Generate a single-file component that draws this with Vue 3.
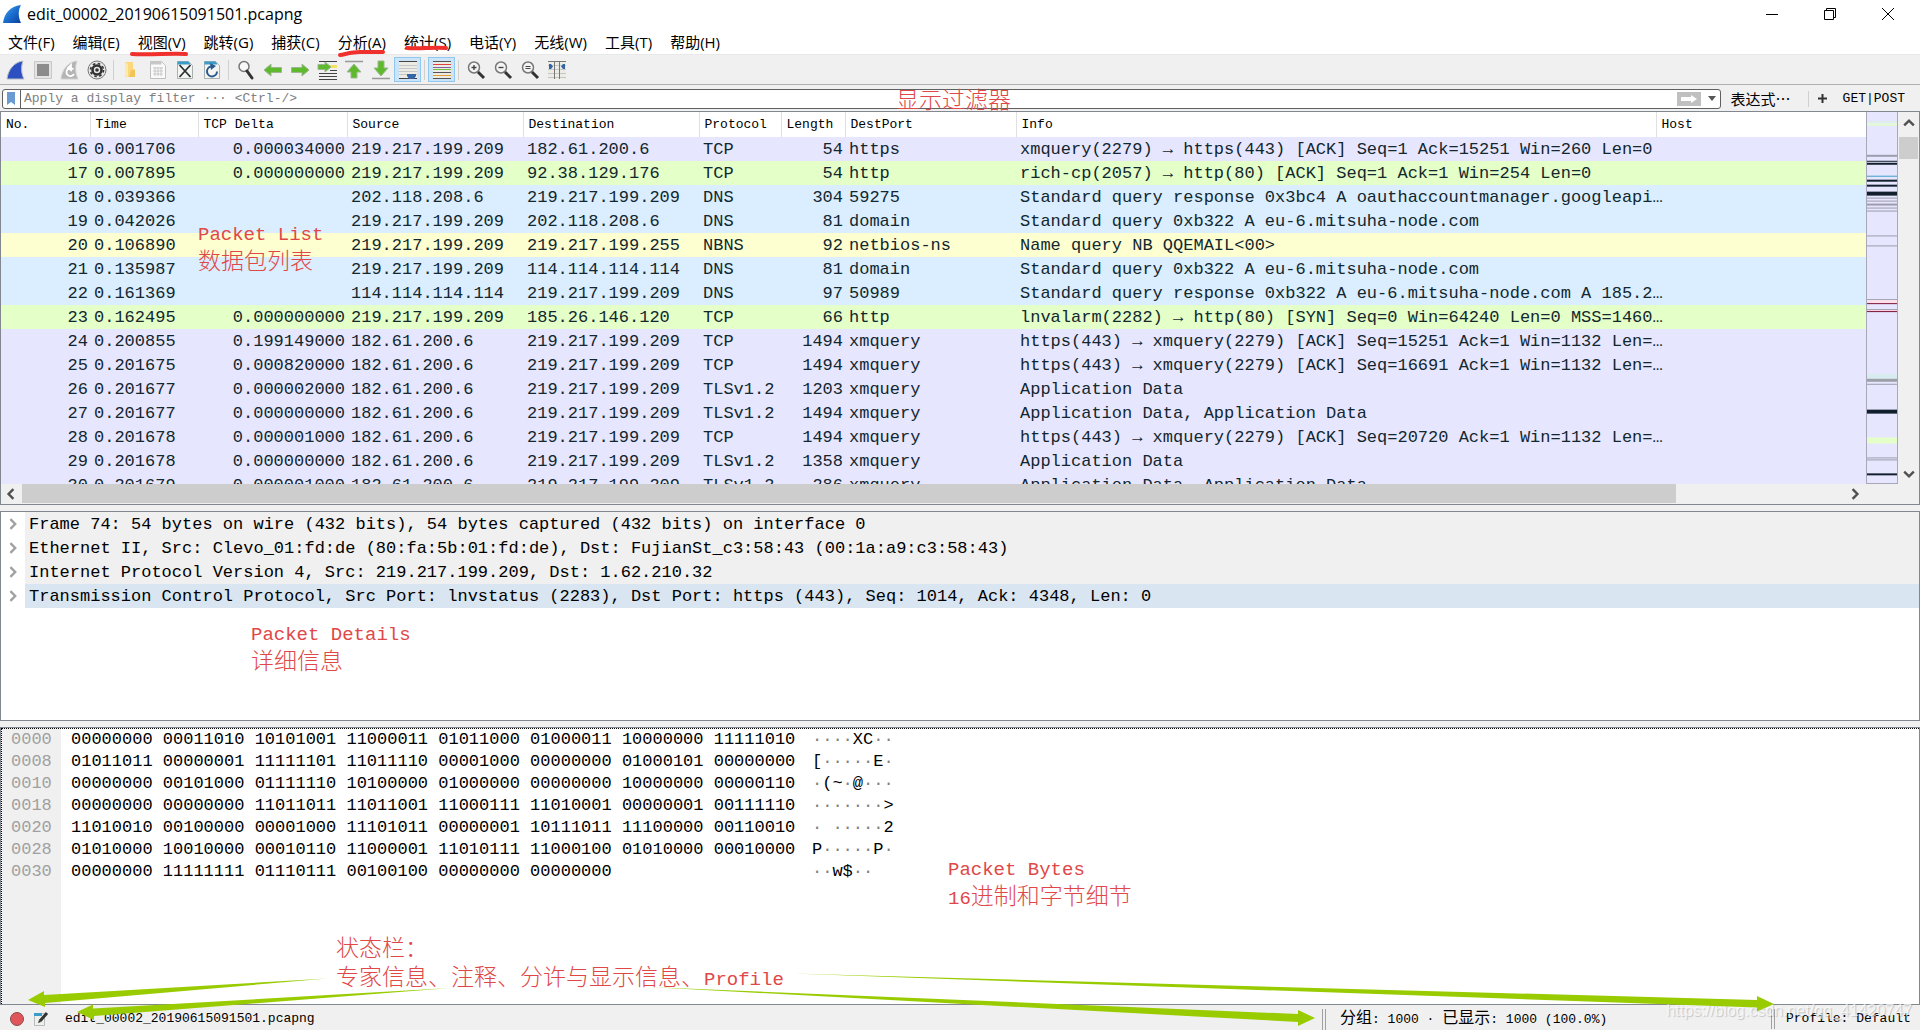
<script setup>
const fileName = 'edit_00002_20190615091501.pcapng'

const menus = [
  ['文件', '(F)'],
  ['编辑', '(E)'],
  ['视图', '(V)'],
  ['跳转', '(G)'],
  ['捕获', '(C)'],
  ['分析', '(A)'],
  ['统计', '(S)'],
  ['电话', '(Y)'],
  ['无线', '(W)'],
  ['工具', '(T)'],
  ['帮助', '(H)'],
]

const columns = [
  { name: 'No.', cls: 'c-no' },
  { name: 'Time', cls: 'c-time' },
  { name: 'TCP Delta', cls: 'c-delta' },
  { name: 'Source', cls: 'c-addr' },
  { name: 'Destination', cls: 'c-addr' },
  { name: 'Protocol', cls: 'c-proto' },
  { name: 'Length', cls: 'c-len' },
  { name: 'DestPort', cls: 'c-port' },
  { name: 'Info', cls: 'c-info' },
  { name: 'Host', cls: 'c-host' },
]

const me = '219.217.199.209'
const srv = '182.61.200.6'
const packets = [
  ['tcp', 16, '0.001706', '0.000034000', me, srv, 'TCP', 54, 'https', 'xmquery(2279) → https(443) [ACK] Seq=1 Ack=15251 Win=260 Len=0'],
  ['http', 17, '0.007895', '0.000000000', me, '92.38.129.176', 'TCP', 54, 'http', 'rich-cp(2057) → http(80) [ACK] Seq=1 Ack=1 Win=254 Len=0'],
  ['udp', 18, '0.039366', '', '202.118.208.6', me, 'DNS', 304, '59275', 'Standard query response 0x3bc4 A oauthaccountmanager.googleapi…'],
  ['udp', 19, '0.042026', '', me, '202.118.208.6', 'DNS', 81, 'domain', 'Standard query 0xb322 A eu-6.mitsuha-node.com'],
  ['smb', 20, '0.106890', '', me, '219.217.199.255', 'NBNS', 92, 'netbios-ns', 'Name query NB QQEMAIL<00>'],
  ['udp', 21, '0.135987', '', me, '114.114.114.114', 'DNS', 81, 'domain', 'Standard query 0xb322 A eu-6.mitsuha-node.com'],
  ['udp', 22, '0.161369', '', '114.114.114.114', me, 'DNS', 97, '50989', 'Standard query response 0xb322 A eu-6.mitsuha-node.com A 185.2…'],
  ['http', 23, '0.162495', '0.000000000', me, '185.26.146.120', 'TCP', 66, 'http', 'lnvalarm(2282) → http(80) [SYN] Seq=0 Win=64240 Len=0 MSS=1460…'],
  ['tcp', 24, '0.200855', '0.199149000', srv, me, 'TCP', 1494, 'xmquery', 'https(443) → xmquery(2279) [ACK] Seq=15251 Ack=1 Win=1132 Len=…'],
  ['tcp', 25, '0.201675', '0.000820000', srv, me, 'TCP', 1494, 'xmquery', 'https(443) → xmquery(2279) [ACK] Seq=16691 Ack=1 Win=1132 Len=…'],
  ['tcp', 26, '0.201677', '0.000002000', srv, me, 'TLSv1.2', 1203, 'xmquery', 'Application Data'],
  ['tcp', 27, '0.201677', '0.000000000', srv, me, 'TLSv1.2', 1494, 'xmquery', 'Application Data, Application Data'],
  ['tcp', 28, '0.201678', '0.000001000', srv, me, 'TCP', 1494, 'xmquery', 'https(443) → xmquery(2279) [ACK] Seq=20720 Ack=1 Win=1132 Len=…'],
  ['tcp', 29, '0.201678', '0.000000000', srv, me, 'TLSv1.2', 1358, 'xmquery', 'Application Data'],
  ['tcp', 30, '0.201679', '0.000001000', srv, me, 'TLSv1.2', 286, 'xmquery', 'Application Data, Application Data'],
]

/* [y, height, colour] of the coloured strips in the intelligent scroll bar */
const strips = [
  [9, 1, '#d8f0e4'], [11, 3, '#e2f8d8'], [43, 2, '#9c9cac'], [49, 1, '#12202e'], [51, 2, '#12202e'],
  [64, 1, '#3fa0c8'], [68, 2, '#12202e'], [73, 2, '#12202e'], [80, 4, '#12202e'], [86, 1, '#9c9cac'],
  [89, 1, '#9c9cac'], [92, 2, '#9c9cac'], [96, 1, '#9c9cac'], [99, 1, '#9c9cac'], [124, 1, '#9c9cac'],
  [134, 1, '#9c9cac'], [188, 1, '#9c9cac'], [189, 3, '#fbe0e8'], [192, 1, '#7a1238'], [198, 1, '#9c9cac'],
  [199, 1, '#fbd0dc'], [200, 1, '#7a1238'], [263, 5, '#d8ecf0'], [268, 3, '#9c9fa8'], [273, 1, '#9c9cac'],
  [299, 4, '#12202e'], [327, 6, '#e4ffc7'], [347, 1, '#9c9cac'], [349, 1, '#9c9cac'], [363, 2, '#12202e'],
]

const details = [
  'Frame 74: 54 bytes on wire (432 bits), 54 bytes captured (432 bits) on interface 0',
  'Ethernet II, Src: Clevo_01:fd:de (80:fa:5b:01:fd:de), Dst: FujianSt_c3:58:43 (00:1a:a9:c3:58:43)',
  'Internet Protocol Version 4, Src: 219.217.199.209, Dst: 1.62.210.32',
  'Transmission Control Protocol, Src Port: lnvstatus (2283), Dst Port: https (443), Seq: 1014, Ack: 4348, Len: 0',
]

const bytes = [
  ['0000', '00000000 00011010 10101001 11000011 01011000 01000011 10000000 11111010', '····XC··'],
  ['0008', '01011011 00000001 11111101 11011110 00001000 00000000 01000101 00000000', '[·····E·'],
  ['0010', '00000000 00101000 01111110 10100000 01000000 00000000 10000000 00000110', '·(~·@···'],
  ['0018', '00000000 00000000 11011011 11011001 11000111 11010001 00000001 00111110', '·······>'],
  ['0020', '11010010 00100000 00001000 11101011 00000001 10111011 11100000 00110010', '· ·····2'],
  ['0028', '01010000 10010000 00010110 11000001 11010111 11000100 01010000 00010000', 'P·····P·'],
  ['0030', '00000000 11111111 01110111 00100100 00000000 00000000', '··w$··'],
]
</script>

<template>
  <div class="window">
    <header class="titlebar">
      <svg class="fin" viewBox="0 0 20 20" aria-hidden="true">
        <defs>
          <linearGradient id="fin-fill" x1="0" y1="0" x2="1" y2="1">
            <stop offset="0" stop-color="#5aa6e6" />
            <stop offset=".5" stop-color="#1a6fd0" />
            <stop offset="1" stop-color="#0d3f9a" />
          </linearGradient>
        </defs>
        <path d="M1 19C2 10 8 2 19 1c-3 5-3 12 0 18z" fill="url(#fin-fill)" />
      </svg>
      <h1>{{ fileName }}</h1>
      <div class="controls">
        <button aria-label="最小化"><svg viewBox="0 0 14 14"><path d="M1 7.500h12" /></svg></button>
        <button aria-label="还原"><svg viewBox="0 0 14 14"><path d="M1.500 3.500h9v9h-9zM3.500 3.500v-2h9v9h-2" /></svg></button>
        <button aria-label="关闭"><svg viewBox="0 0 14 14"><path d="M1 1l12 12M13 1L1 13" /></svg></button>
      </div>
    </header>

    <nav class="menubar">
      <button v-for="m in menus" :key="m[1]">{{ m[0] }}{{ m[1] }}</button>
      <svg class="marks" viewBox="0 0 460 14" aria-hidden="true">
        <path d="M2 9C20 10 42 8 56 9" />
        <path d="M210 10C216 9 222 7 230 7S244 7 253 7" />
        <path d="M277 3C290 4 304 2 316 3" />
      </svg>
    </nav>

    <div class="toolbar">
      <button aria-label="开始捕获">
        <svg viewBox="0 0 20 20"><path d="M1 19C2 10 8 2 17 1c-2 5-2 12 1 18z" fill="#2c50c0" stroke="#b8bcc8" /></svg>
      </button>
      <button aria-label="停止捕获">
        <svg viewBox="0 0 20 20"><path d="M1.500 1.500h17v17h-17z" fill="#e4e4e4" stroke="#c8c8c8" /><path d="M4 4h12v12H4z" fill="#8c8c8c" /></svg>
      </button>
      <button aria-label="重新捕获">
        <svg viewBox="0 0 20 20"><path d="M1 19C2 10 8 2 17 1c-2 5-2 12 1 18z" fill="#b4b4b4" stroke="#d0d0d0" /><path d="M13.500 9.500A4 4 0 1 0 14 14M8 8l3-3v5z" fill="none" stroke="#fff" stroke-width="1.800" /></svg>
      </button>
      <button aria-label="捕获选项">
        <svg viewBox="0 0 20 20"><circle cx="10" cy="10" r="9" fill="#e8e8e8" stroke="#777" /><circle cx="10" cy="10" r="4.500" fill="none" stroke="#333" stroke-width="2.600" /><circle cx="10" cy="10" r="6.500" fill="none" stroke="#333" stroke-width="1.600" stroke-dasharray="2.600 2.500" /><circle cx="10" cy="10" r="1.800" fill="#333" /></svg>
      </button>
      <i class="sep"></i>
      <button aria-label="打开">
        <svg viewBox="0 0 20 20"><path d="M4 2h8v7h2v8H4z" fill="#fbd87c" /><path d="M10 10h4v7h-6z" fill="#f3c558" /><path d="M4 2l3 2v14l-3-2z" fill="#ffe8a8" /></svg>
      </button>
      <button aria-label="保存">
        <svg viewBox="0 0 20 20"><path d="M2.500 1.500h11l4 4v13h-15z" fill="#fafafa" stroke="#c0c0c0" /><path d="M2.500 1.500h11v3h-11z" fill="#c8c8c8" /><path d="M5 8h10M5 11h10M5 14h10M7 7v9M10 7v9M13 7v9" stroke="#c8c8c8" /></svg>
      </button>
      <button aria-label="关闭文件">
        <svg viewBox="0 0 20 20"><path d="M2.500 1.500h11l4 4v13h-15z" fill="#f4f5f0" stroke="#a8b0b0" /><path d="M2.500 1.500h11l2 3h-13z" fill="#3a9cc8" /><path d="M4.500 5l11 12M15.500 5l-11 12" stroke="#2a3038" stroke-width="1.800" /></svg>
      </button>
      <button aria-label="重新加载">
        <svg viewBox="0 0 20 20"><path d="M2.500 1.500h11l4 4v13h-15z" fill="#f4f5f0" stroke="#a8b0b0" /><path d="M2.500 1.500h11l2 3h-13z" fill="#3a9cc8" /><path d="M9 6.500a5 5 0 1 0 6 5" fill="none" stroke="#285a90" stroke-width="2" /><path d="M8 3l6 3-5 4z" fill="#285a90" /></svg>
      </button>
      <i class="sep"></i>
      <button aria-label="查找">
        <svg viewBox="0 0 20 20"><circle cx="8" cy="6.500" r="5" fill="#f8f8f8" stroke="#777" stroke-width="1.500" /><path d="M11 11l5 7" stroke="#333" stroke-width="3" stroke-linecap="round" /></svg>
      </button>
      <button aria-label="后退">
        <svg viewBox="0 0 20 20"><path d="M1 10l7-6v3.500h10.500v5H8V16z" fill="#5fb92c" stroke="#9cb890" /></svg>
      </button>
      <button aria-label="前进">
        <svg viewBox="0 0 20 20"><path d="M19 10l-7-6v3.500H1.500v5H12V16z" fill="#5fb92c" stroke="#9cb890" /></svg>
      </button>
      <button aria-label="转到分组">
        <svg viewBox="0 0 20 20"><path d="M2 1.500h18M2 13.500h18M2 16.500h18M2 19.500h18M13 10.500h7" stroke="#444" /><path d="M12 5h8v3h-8z" fill="#f4e060" /><path d="M14 7l-6-5v2.500H1v5h7V12z" fill="#5fb92c" stroke="#9cb890" /></svg>
      </button>
      <button aria-label="首个分组">
        <svg viewBox="0 0 20 20"><path d="M1 1.500h18" stroke="#999" stroke-width="1.500" /><path d="M10 4l7 8h-4v6H7v-6H3z" fill="#5fb92c" stroke="#9cb890" /></svg>
      </button>
      <button aria-label="末个分组">
        <svg viewBox="0 0 20 20"><path d="M1 18.500h18" stroke="#999" stroke-width="1.500" /><path d="M10 16L3 8h4V1h6v7h4z" fill="#5fb92c" stroke="#9cb890" /></svg>
      </button>
      <button class="on" aria-label="自动滚动" aria-pressed="true">
        <svg viewBox="0 0 20 20"><path d="M1 2h18v16H1z" fill="#ecebe4" /><path d="M1 1.500h18M1 18.500h18" stroke="#444" /><path d="M1 5.500h18M1 8.500h18M1 11.500h18M1 14.500h18" stroke="#c4c8c8" /><path d="M9 14h9v2l-2 3h-5l-2-3z" fill="#3465a4" /></svg>
      </button>
      <i class="sep"></i>
      <button class="on" aria-label="着色" aria-pressed="true">
        <svg viewBox="0 0 20 20"><path d="M1 1h18v18H1z" fill="#ecebe4" /><path d="M1 1.500h18M1 12.500h18M1 18.500h18" stroke="#555" /><path d="M1 4.500h18" stroke="#e04040" /><path d="M1 7.500h18" stroke="#8060a0" /><path d="M1 9.500h18" stroke="#70c040" /><path d="M1 15.500h18" stroke="#e0a030" /></svg>
      </button>
      <i class="sep"></i>
      <button aria-label="放大">
        <svg viewBox="0 0 20 20"><circle cx="8" cy="7.500" r="5.500" fill="#f4f4f4" stroke="#777" stroke-width="1.500" /><path d="M12 12l6 6" stroke="#333" stroke-width="3" /><path d="M5.500 7.500h5M8 5v5" stroke="#444" stroke-width="1.400" /></svg>
      </button>
      <button aria-label="缩小">
        <svg viewBox="0 0 20 20"><circle cx="8" cy="7.500" r="5.500" fill="#f4f4f4" stroke="#777" stroke-width="1.500" /><path d="M12 12l6 6" stroke="#333" stroke-width="3" /><path d="M5.500 7.500h5" stroke="#444" stroke-width="1.400" /></svg>
      </button>
      <button aria-label="原始大小">
        <svg viewBox="0 0 20 20"><circle cx="8" cy="7.500" r="5.500" fill="#f4f4f4" stroke="#777" stroke-width="1.500" /><path d="M12 12l6 6" stroke="#333" stroke-width="3" /><path d="M5.500 6.500h5M5.500 8.500h5" stroke="#444" stroke-width="1.200" /></svg>
      </button>
      <button aria-label="调整列宽">
        <svg viewBox="0 0 20 20"><path d="M1 1h18v18H1z" fill="#ecebe4" /><path d="M1 5.500h18M1 9.500h18M1 13.500h18M1 17.500h18" stroke="#c4c8c8" /><path d="M1 1.500h18M7.500 1v18M12.500 1v18" stroke="#777" /><path d="M2 4h2l2 2.500L4 9H2zM18 4h-2l-2 2.500L16 9h2z" fill="#3465a4" /></svg>
      </button>
    </div>

    <div class="filterbar">
      <div class="filterbox">
        <svg class="bookmark" viewBox="0 0 10 14" aria-hidden="true"><path d="M1 0h8v13l-4-3-4 3z" fill="#6b9bd2" /></svg>
        <input type="text" aria-label="Display filter" placeholder="Apply a display filter ··· &lt;Ctrl-/&gt;" />
        <button class="apply" aria-label="应用"><svg viewBox="0 0 24 14"><path d="M4 5h10V3l6 4-6 4V9H4z" fill="#fff" /></svg></button>
        <button class="caret" aria-label="历史"><svg viewBox="0 0 8 5"><path d="M0 0h8L4 5z" fill="#555" /></svg></button>
      </div>
      <button class="expr">表达式…</button>
      <i class="sep"></i>
      <button class="plus" aria-label="添加过滤按钮"><svg viewBox="0 0 9 9"><path d="M4.500 0v9M0 4.500h9" stroke="#333" stroke-width="2" /></svg></button>
      <button class="quick">GET|POST</button>
      <span class="note note-filter">显示过滤器</span>
    </div>

    <main class="panes">
      <section class="pane list">
        <div class="list-top">
          <div class="table-clip">
            <table>
              <colgroup><col v-for="c in columns" :key="c.name" :class="c.cls" /></colgroup>
              <thead>
                <tr><th v-for="c in columns" :key="c.name" scope="col">{{ c.name }}</th></tr>
              </thead>
              <tbody>
                <tr v-for="p in packets" :key="p[1]" :class="p[0]">
                  <td class="num">{{ p[1] }}</td>
                  <td>{{ p[2] }}</td>
                  <td class="num">{{ p[3] }}</td>
                  <td>{{ p[4] }}</td>
                  <td>{{ p[5] }}</td>
                  <td>{{ p[6] }}</td>
                  <td class="num">{{ p[7] }}</td>
                  <td>{{ p[8] }}</td>
                  <td>{{ p[9] }}</td>
                  <td></td>
                </tr>
              </tbody>
            </table>
          </div>
          <svg class="minimap" viewBox="0 0 30 373" preserveAspectRatio="none" aria-hidden="true">
            <rect v-for="s in strips" :key="s[0]" x="0" :y="s[0]" width="30" :height="s[1]" :fill="s[2]" />
          </svg>
          <div class="vscroll">
            <svg class="chev" viewBox="0 0 10 10"><path d="M1 7l4-4 4 4" /></svg>
            <div class="vthumb"></div>
            <svg class="chev" viewBox="0 0 10 10"><path d="M1 3l4 4 4-4" /></svg>
          </div>
        </div>
        <div class="hscroll">
          <svg class="chev" viewBox="0 0 10 10"><path d="M7 1L3 5l4 4" /></svg>
          <div class="track"><div class="hthumb"></div></div>
          <svg class="chev" viewBox="0 0 10 10"><path d="M3 1l4 4-4 4" /></svg>
        </div>
        <p class="note note-list">Packet List<br /><span class="zh">数据包列表</span></p>
      </section>

      <section class="pane details">
        <ul>
          <li v-for="(d, i) in details" :key="i" :class="{ selected: i === 3 }">
            <svg viewBox="0 0 10 10" aria-hidden="true"><path d="M2 1l4 4-4 4" /></svg>
            <span>{{ d }}</span>
          </li>
        </ul>
        <p class="note note-details">Packet Details<br /><span class="zh">详细信息</span></p>
      </section>

      <section class="pane bytes">
        <div class="offsets"><div v-for="b in bytes" :key="b[0]">{{ b[0] }}</div></div>
        <div class="bits"><div v-for="b in bytes" :key="b[0]">{{ b[1] }}</div></div>
        <div class="ascii">
          <div v-for="b in bytes" :key="b[0]"><span v-for="(ch, i) in b[2]" :key="i" :class="{ dot: ch === '·' }">{{ ch }}</span></div>
        </div>
        <p class="note note-bytes">Packet Bytes<br />16<span class="zh">进制和字节细节</span></p>
        <p class="note note-status"><span class="zh">状态栏：<br />专家信息、注释、分许与显示信息、</span>Profile</p>
      </section>
    </main>

    <footer class="statusbar">
      <svg class="expert" viewBox="0 0 16 16" aria-hidden="true"><circle cx="8" cy="8" r="6.500" fill="#e0555a" stroke="#8a4a4c" /></svg>
      <svg class="comment" viewBox="0 0 16 16" aria-hidden="true"><path d="M1.500 2.500h10v12h-10z" fill="#f0f0ea" stroke="#b8bcbc" /><path d="M1 2h8v3H1z" fill="#3a9cc8" /><path d="M14 2L7 10" stroke="#333" stroke-width="3" /><path d="M5 12l1-3 2 2z" fill="#333" /></svg>
      <span class="file">{{ fileName }}</span>
      <span class="counts"><span class="zh">分组</span>: 1000 · <span class="zh">已显示</span>: 1000 (100.0%)</span>
      <span class="profile">Profile: Default</span>
      <span class="watermark">https://blog.csdn.net/qq_41420747</span>
    </footer>

    <svg class="arrows" viewBox="0 0 1920 60" preserveAspectRatio="none" aria-hidden="true">
      <path d="M28 30L44 21v4L327 8.500 45 33v4z" />
      <path d="M77 42l16-7.500v4L450 18 94 46v4z" />
      <path d="M1315 48l-17-8v4L649 17l649 35v4z" />
      <path d="M1774 34l-17-8v4L792 3.500 1757 37.500v4z" />
    </svg>
  </div>
</template>

<style>
body {
  background: #f0f0f0;
}
</style>

<style scoped>
.window {
  position: relative;
  display: flex;
  flex-direction: column;
  height: 100vh;
  overflow: hidden;
  background: #f0f0f0;
  color: #000;
  font: 13px/20px 'Liberation Mono', 'Noto Sans CJK SC', monospace;
}
.window * {
  box-sizing: border-box;
}
button {
  margin: 0;
  padding: 0;
  border: 0;
  background: none;
  color: inherit;
  font: inherit;
}
svg {
  display: block;
  flex: none;
}
.titlebar {
  display: flex;
  align-items: center;
  height: 30px;
  flex: none;
  padding: 0 3px 2px 2px;
  background: #fff;
}
.fin {
  width: 20px;
  height: 20px;
}
h1 {
  flex: 1;
  margin: 0 0 0 5px;
  font: 16px/28px 'Open Sans', sans-serif;
}
.controls {
  display: flex;
}
.controls button {
  display: grid;
  place-items: center;
  width: 58px;
  height: 28px;
}
.controls svg {
  width: 14px;
  height: 14px;
  fill: none;
  stroke: #000;
}
.menubar {
  position: relative;
  display: flex;
  gap: 18px;
  flex: none;
  height: 25px;
  padding-left: 8px;
  background: #fff;
  border-bottom: 1px solid #e8e8e8;
  font: 15px/24px 'Open Sans', 'Noto Sans CJK SC', sans-serif;
}
.marks {
  position: absolute;
  left: 130px;
  top: 15px;
  width: 460px;
  height: 14px;
  fill: none;
  stroke: #f0302c;
  stroke-width: 4;
  stroke-linecap: round;
}
.toolbar {
  display: flex;
  align-items: center;
  flex: none;
  height: 30px;
  padding-left: 2px;
  border-bottom: 1px solid #b0b0b0;
}
.toolbar button {
  display: grid;
  place-items: center;
  width: 27px;
  height: 25px;
}
.toolbar .on {
  background: #cce4f7;
  border: 1px solid #90c8f0;
}
.toolbar svg {
  width: 20px;
  height: 20px;
}
.sep {
  width: 1px;
  height: 20px;
  margin: 0 3px;
  background: #d0d0d0;
}
.filterbar {
  position: relative;
  display: flex;
  align-items: center;
  flex: none;
  height: 26px;
  padding: 1px 15px 0 2px;
}
.filterbox {
  display: flex;
  align-items: center;
  flex: 1;
  height: 20px;
  border: 1px solid #606060;
  border-radius: 3px;
  background: #fff;
}
.bookmark {
  width: 10px;
  height: 14px;
  margin: 0 4px 0 3px;
}
.filterbox input {
  flex: 1;
  min-width: 0;
  height: 18px;
  padding: 1px 0 0 3px;
  border: 0;
  border-left: 1px solid #606060;
  outline: 0;
  background: none;
  font: inherit;
}
.filterbox input::placeholder {
  color: #808080;
  opacity: 1;
}
.apply {
  width: 24px;
  height: 14px;
  background: #c0c0c0;
}
.caret {
  margin: 0 4px 0 7px;
}
.caret svg {
  width: 8px;
  height: 5px;
}
.expr {
  width: 78px;
  padding-left: 10px;
  text-align: left;
  font: 15px/20px 'Noto Sans CJK SC', sans-serif;
}
.filterbar .sep {
  margin: 0 9px;
  height: 16px;
}
.plus svg {
  width: 9px;
  height: 9px;
}
.quick {
  margin-left: 16px;
}
.panes {
  display: flex;
  flex-direction: column;
  gap: 6px;
  flex: 1;
  min-height: 0;
}
.pane {
  position: relative;
  flex-basis: 0;
  min-height: 0;
  border: 1px solid #828790;
  background: #fff;
  overflow: hidden;
  font-size: 17px;
}
.list {
  display: flex;
  flex-direction: column;
  flex-grow: 395;
  background: #f0f0f0;
}
.list-top {
  display: flex;
  flex: 1;
  min-height: 0;
}
.table-clip {
  flex: 1;
  min-width: 0;
  overflow: hidden;
  background: #fff;
}
table {
  width: 100%;
  table-layout: fixed;
  border-collapse: collapse;
}
.c-no { width: 89px; }
.c-time { width: 108px; }
.c-delta { width: 149px; }
.c-addr { width: 176px; }
.c-proto { width: 82px; }
.c-len { width: 64px; }
.c-port { width: 171px; }
.c-info { width: 640px; }
th {
  height: 25px;
  padding: 0 0 0 5px;
  border-right: 1px solid #e0e0e0;
  text-align: left;
  font: 13px/24px 'Liberation Mono', monospace;
}
th:last-child {
  border-right: 0;
}
td {
  height: 24px;
  padding: 1px 2px 0 4px;
  line-height: 23px;
  white-space: pre;
  color: #12272e;
}
.num {
  text-align: right;
}
.tcp { background: #e7e6ff; }
.http { background: #e4ffc7; }
.udp { background: #daeeff; }
.smb { background: #feffd0; }
.minimap {
  width: 32px;
  height: 100%;
  border: 1px solid #a8a8b8;
  border-top: 0;
  background: #e7e6ff;
}
.vscroll {
  display: flex;
  flex-direction: column;
  align-items: center;
  width: 21px;
  padding: 5px 0 4px;
}
.chev {
  width: 12px;
  height: 12px;
  fill: none;
  stroke: #505050;
  stroke-width: 2;
}
.vthumb {
  width: 19px;
  height: 22px;
  margin: 8px 0 auto;
  background: #cdcdcd;
}
.hscroll {
  display: flex;
  align-items: center;
  flex: none;
  height: 20px;
  padding: 0 58px 0 4px;
}
.track {
  flex: 1;
  align-self: stretch;
  margin: 0 9px 1px 5px;
}
.hthumb {
  width: 91%;
  height: 100%;
  background: #cdcdcd;
}
.details {
  flex-grow: 209;
}
.details ul {
  margin: 0;
  padding: 0;
  list-style: none;
}
.details li {
  display: flex;
  align-items: center;
  height: 24px;
  white-space: pre;
}
.details li svg {
  width: 12px;
  height: 12px;
  margin: 0 5px 0 7px;
  fill: none;
  stroke: #a0a0a0;
  stroke-width: 2;
}
.details li span {
  flex: 1;
  padding: 2px 0 0 4px;
  line-height: 22px;
  background: #f0f0f0;
}
.details .selected span {
  background: #d9e6f2;
}
.bytes {
  display: flex;
  flex-grow: 278;
  line-height: 22px;
  white-space: pre;
}
.bytes::after {
  content: '';
  position: absolute;
  inset: 0;
  border-top: 1px dotted #000;
  border-left: 1px dotted #000;
}
.offsets,
.bits,
.ascii {
  padding-top: 1px;
}
.offsets {
  width: 60px;
  padding-left: 10px;
  background: #f0f0f0;
  color: #a0a0a0;
}
.bits {
  width: 751px;
  padding-left: 10px;
}
.dot {
  color: #808080;
}
.statusbar {
  position: relative;
  display: flex;
  align-items: center;
  flex: none;
  height: 25px;
  padding: 3px 5px 0 9px;
  white-space: pre;
}
.expert,
.comment {
  width: 16px;
  height: 16px;
  margin-right: 8px;
}
.file {
  flex: 1;
  padding-left: 8px;
}
.statusbar .zh {
  font-size: 16px;
  line-height: 20px;
}
.counts {
  width: 449px;
  padding-left: 14px;
  border-left: 4px double #a0a0a0;
}
.profile {
  width: 144px;
  padding-left: 11px;
  border-left: 4px double #a0a0a0;
}
.watermark {
  position: absolute;
  right: 8px;
  top: -4px;
  color: #ffffffb0;
  font: 16px/20px 'Liberation Sans', sans-serif;
  text-shadow: 1px 1px 1px #00000030;
}
.note {
  position: absolute;
  margin: 0;
  color: #e04848;
  font: 19px/28px 'Liberation Mono', 'Noto Sans CJK SC', monospace;
  white-space: pre;
}
.note .zh,
.note-filter {
  font-size: 23px;
  font-weight: 300;
}
.note-filter {
  left: 896px;
  top: 3px;
}
.note-list {
  left: 197px;
  top: 109px;
}
.note-details {
  left: 250px;
  top: 109px;
}
.note-bytes {
  left: 947px;
  top: 128px;
}
.note-status {
  left: 335px;
  top: 208px;
}
.arrows {
  position: absolute;
  left: 0;
  bottom: 0;
  width: 100%;
  height: 60px;
  fill: #99cc00;
  pointer-events: none;
}
</style>
